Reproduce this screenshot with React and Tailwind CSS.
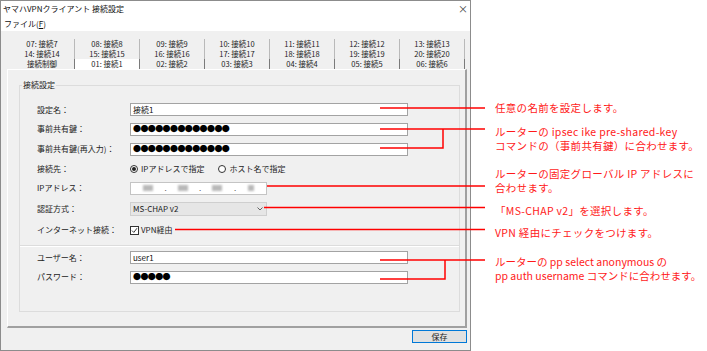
import React from 'react';

// Tabs of the connection dialog, three rows of seven
const TAB_ROWS = [
  ['07: 接続7', '08: 接続8', '09: 接続9', '10: 接続10', '11: 接続11', '12: 接続12', '13: 接続13'],
  ['14: 接続14', '15: 接続15', '16: 接続16', '17: 接続17', '18: 接続18', '19: 接続19', '20: 接続20'],
  ['接続制御', '01: 接続1', '02: 接続2', '03: 接続3', '04: 接続4', '05: 接続5', '06: 接続6'],
];

const FONT = { fontFamily: '"Noto Sans CJK JP", "Noto Sans", sans-serif' };

const Field = ({ children, className = '' }) => (
  <div
    className={`h-[13px] w-[278px] border border-[#a3a3a3] bg-white flex items-center pl-[2px] text-[8px] text-[#111] ${className}`}
  >
    {children}
  </div>
);

const Row = ({ label, h, children }) => (
  <div className={`flex items-center ${h}`}>
    <div className="w-[93px] text-[8px] text-[#222] whitespace-nowrap">{label}</div>
    {children}
  </div>
);

const Dots = ({ n }) => (
  <span className="text-[8px] leading-none tracking-[-0.6px] text-black">{'●'.repeat(n)}</span>
);

const Blob = ({ w }) => <div className={`h-[6px] bg-[#b8b8b8] blur-[1px] ${w}`} />;

const Note = ({ top, leading, tracking = 'tracking-[0.3px]', children }) => (
  <div
    className={`absolute left-[495px] text-[10.5px] text-[#ff1a1a] whitespace-nowrap ${tracking} ${top} ${leading}`}
  >
    {children}
  </div>
);

export default function App() {
  return (
    <div className="relative w-[707px] h-[351px] bg-white overflow-hidden" style={FONT}>
      {/* Dialog window */}
      <div className="w-[471px] h-[351px] border border-[#8c8c8c] bg-[#f0f0f0] flex flex-col">
        {/* Title bar */}
        <div className="h-[15px] bg-white flex items-center justify-between pl-[2px] pr-[2px]">
          <span className="text-[8px] text-[#111]">ヤマハVPNクライアント 接続設定</span>
          <span className="text-[10px] text-[#444] leading-none">×</span>
        </div>
        {/* Menu bar */}
        <div className="h-[15px] bg-white flex items-center pl-[3px]">
          <span className="text-[8px] text-[#111]">
            ファイル(<span className="underline">F</span>)
          </span>
        </div>

        {/* Tabs */}
        <div className="mt-[8px] ml-[9px] w-[455px] flex flex-col">
          {TAB_ROWS.map((row, r) => (
            <div key={r} className="flex h-[10px]">
              {row.map((t) => (
                <div
                  key={t}
                  className={`w-[65px] flex items-center justify-center text-[7.5px] text-[#222] border-r ${
                    r === 2 ? 'border-[#7a7a7a]' : 'border-[#b9b9b9]'
                  } ${t === '01: 接続1' ? 'bg-white' : ''}`}
                >
                  {t}
                </div>
              ))}
            </div>
          ))}
        </div>

        {/* Tab panel */}
        <div className="ml-[6px] w-[460px] h-[259px] border-l border-t border-[#ffffff] border-r-2 border-b-2 border-r-[#a0a0a0] border-b-[#a0a0a0] pl-[11px] pt-[15px]">
          {/* Group box */}
          <div className="relative w-[441px] h-[227px] border border-[#dcdcdc]">
            <span className="absolute left-[2px] top-[-7px] bg-[#f0f0f0] px-[1px] text-[8px] leading-[12px] text-[#222]">
              接続設定
            </span>
            <div className="pl-[17px] pt-[14px] flex flex-col">
              <Row label="設定名：" h="h-[19px]">
                <Field>接続1</Field>
              </Row>
              <Row label="事前共有鍵：" h="h-[20px]">
                <Field>
                  <Dots n={13} />
                </Field>
              </Row>
              <Row label="事前共有鍵(再入力)：" h="h-[20px]">
                <Field>
                  <Dots n={13} />
                </Field>
              </Row>
              <Row label="接続先：" h="h-[19px]">
                <div className="flex items-center gap-[3px] text-[8px] text-[#222]">
                  <span className="w-[8px] h-[8px] rounded-full border border-[#333] bg-white flex items-center justify-center">
                    <span className="w-[4px] h-[4px] rounded-full bg-[#222]" />
                  </span>
                  <span>IPアドレスで指定</span>
                  <span className="ml-[11px] w-[8px] h-[8px] rounded-full border border-[#333] bg-white" />
                  <span>ホスト名で指定</span>
                </div>
              </Row>
              <Row label="IPアドレス：" h="h-[20px]">
                <div className="h-[13px] w-[137px] border border-[#c4c4c4] bg-white flex items-center pl-[12px] text-[8px] text-[#555]">
                  <Blob w="w-[10px]" />
                  <span className="w-[25px] text-center">.</span>
                  <Blob w="w-[10px]" />
                  <span className="w-[24px] text-center">.</span>
                  <Blob w="w-[10px]" />
                  <span className="w-[26px] text-center">.</span>
                  <Blob w="w-[6px]" />
                </div>
              </Row>
              <Row label="認証方式：" h="h-[22px]">
                <div className="h-[14px] w-[137px] border border-[#cfcfcf] bg-[#e6e6e6] flex items-center justify-between pl-[2px] pr-[3px] text-[8px] text-[#222]">
                  <span>MS-CHAP v2</span>
                  <svg width="6" height="4" viewBox="0 0 6 4">
                    <polyline points="0.5,0.5 3,3 5.5,0.5" fill="none" stroke="#555" strokeWidth="0.9" />
                  </svg>
                </div>
              </Row>
              <Row label="インターネット接続：" h="h-[20px]">
                <div className="flex items-center gap-[2px] text-[8px] text-[#222]">
                  <span className="w-[9px] h-[9px] border border-[#333] bg-white flex items-center justify-center">
                    <svg width="7" height="7" viewBox="0 0 7 7">
                      <polyline points="1,3.6 2.8,5.4 6,1.2" fill="none" stroke="#222" strokeWidth="0.9" />
                    </svg>
                  </span>
                  <span>VPN経由</span>
                </div>
              </Row>
            </div>
            {/* Separator */}
            <div className="mt-[5px] h-[2px] border-t border-[#dcdcdc] border-b border-b-white" />
            <div className="pl-[17px] pt-[1px] flex flex-col">
              <Row label="ユーザー名：" h="h-[19px]">
                <Field>user1</Field>
              </Row>
              <Row label="パスワード：" h="h-[20px]">
                <Field>
                  <Dots n={5} />
                </Field>
              </Row>
            </div>
          </div>
        </div>

        {/* Save button */}
        <div className="mt-[2px] ml-[411px] w-[55px] h-[13px] border border-[#0078d7] bg-[#e1e1e1] flex items-center justify-center text-[8px] text-[#222]">
          保存
        </div>
      </div>

      {/* Red leader lines */}
      <svg className="absolute inset-0 pointer-events-none" width="707" height="351">
        <g fill="none" stroke="#ff0000" strokeWidth="1.5">
          <path d="M380 108 H485" />
          <path d="M380 129 H485 M380 148 H443 V129" />
          <path d="M267 186 H485" />
          <path d="M264 207.5 H485" />
          <path d="M175 229.5 H485" />
          <path d="M380 260 H485 M380 279 H445 V260" />
        </g>
      </svg>

      {/* Annotations */}
      <Note top="top-[100px]" leading="leading-[15px]">任意の名前を設定します。</Note>
      <Note top="top-[125px]" leading="leading-[13.5px]">
        ルーターの ipsec ike pre-shared-key
        <br />
        コマンドの（事前共有鍵）に合わせます。
      </Note>
      <Note top="top-[167px]" leading="leading-[14px]">
        ルーターの固定グローバル IP アドレスに
        <br />
        合わせます。
      </Note>
      <Note top="top-[203px]" leading="leading-[15px]">「MS-CHAP v2」を選択します。</Note>
      <Note top="top-[225px]" leading="leading-[15px]">VPN 経由にチェックをつけます。</Note>
      <Note top="top-[255px]" leading="leading-[13.5px]" tracking="tracking-[0px]">
        ルーターの pp select anonymous の
        <br />
        pp auth username コマンドに合わせます。
      </Note>
    </div>
  );
}
